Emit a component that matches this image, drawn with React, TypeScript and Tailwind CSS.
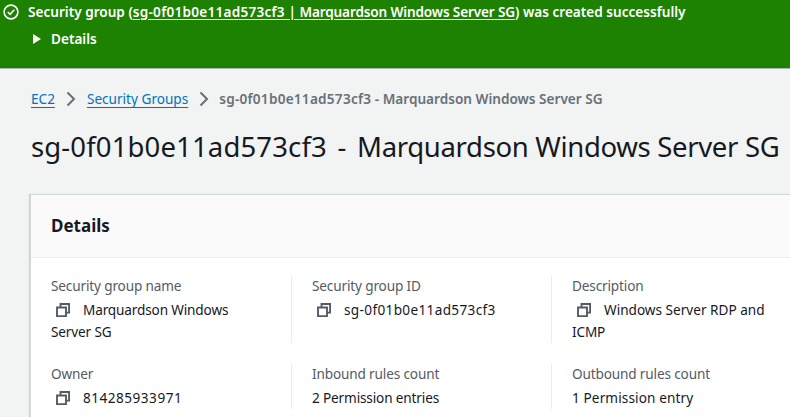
const SG_ID = 'sg-0f01b0e11ad573cf3'

function CopyIcon() {
  return (
    <svg width="14" height="14" viewBox="0 0 14 14" fill="none" stroke="#545b64" strokeWidth="1.9" className="block">
      <path d="M1 4.5h9v8.6H1z" />
      <path d="M4.5 4.5V1h8.6v8.6H10" />
    </svg>
  )
}

function Chevron() {
  return (
    <svg width="16" height="16" viewBox="0 0 16 16" fill="none" stroke="#687078" strokeWidth="2" className="shrink-0">
      <path d="M4.5 1.5l6.5 6.5-6.5 6.5" />
    </svg>
  )
}

interface FieldProps {
  label: string
  children: React.ReactNode
  first?: boolean
}

function Field({ label, children, first }: FieldProps) {
  return (
    <div className={`shrink-0 pr-5 tracking-[-0.011em] ${first ? 'w-[240px]' : 'w-[260px] pl-5 border-l border-[#eaeded]'}`}>
      <div className="text-[#545b64] leading-[22px]">{label}</div>
      <div className="mt-[2px] text-[#16191f] leading-[22px]">{children}</div>
    </div>
  )
}

function CopyValue({ text, rest, wide }: { text: string; rest?: string; wide?: string }) {
  return (
    <>
      <span className="inline-block w-[32px] align-[-2px] pl-[5px]">
        <CopyIcon />
      </span>
      <span className={wide}>{text}</span>
      {rest && <br />}
      {rest}
    </>
  )
}

export default function App() {
  return (
    <div className="w-[790px] h-[417px] overflow-hidden bg-[#f2f3f3] text-[13.6px] font-['Noto_Sans','Open_Sans',sans-serif]">
      <div className="h-[69px] bg-[#1d8102] border-b border-[#aab7b8] text-white font-semibold">
        <div className="flex items-center gap-[10px] pl-[3px] h-[24px]">
          <svg width="16" height="16" viewBox="0 0 16 16" fill="none" stroke="#fff" strokeWidth="1.6" className="shrink-0">
            <circle cx="8" cy="8" r="6.9" />
            <path d="M4.8 8l2.3 2.4 4.2-4.6" />
          </svg>
          <span className="-ml-[1px] whitespace-nowrap">
            Security group (<span className="underline underline-offset-[2px]"><span className="tracking-[0.018em]">{SG_ID}</span> | <span className="tracking-[-0.011em]">Marquardson Windows Server SG</span></span>) was created successfully
          </span>
        </div>
        <div className="flex items-center gap-[10px] pl-[33px] mt-[4px] h-[22px]">
          <span className="w-0 h-0 border-y-[5px] border-y-transparent border-l-[8px] border-l-white" />
          <span>Details</span>
        </div>
      </div>

      <div className="pl-[31px] pt-[19px] flex items-center h-[41px] whitespace-nowrap text-[#0073bb]">
        <span className="underline underline-offset-[3px]">EC2</span>
        <span className="mx-[8px]"><Chevron /></span>
        <span className="underline underline-offset-[3px]">Security Groups</span>
        <span className="ml-[8px] mr-[7px]"><Chevron /></span>
        <span className="text-[#687078] font-semibold">
          <span className="tracking-[0.018em]">{SG_ID}</span> - Marquardson Windows Server SG
        </span>
      </div>

      <h1 className="pl-[31px] mt-[17px] text-[#16191f] text-[27.5px] leading-[40px] whitespace-nowrap">
        <span className="tracking-[0.005em]">{SG_ID}</span> <span className="mx-[3.5px]">-</span> <span className="tracking-[-0.012em]">Marquardson Windows Server SG</span>
      </h1>

      <div className="ml-[30px] mt-[27px] w-[800px] bg-white border-l border-t border-[#d5dbdb] shadow-[-1px_0_1px_rgba(0,28,36,0.15)]">
        <div className="h-[63px] bg-[#fafafa] border-b border-[#eaeded] pl-[20px] flex items-center">
          <h2 className="text-[#16191f] font-bold text-[17px] -mt-[1px]">Details</h2>
        </div>
        <div className="pl-[20px] pt-[17px] pb-[20px]">
          <div className="flex h-[68px]">
            <Field label="Security group name" first><CopyValue text="Marquardson Windows" rest="Server SG" /></Field>
            <Field label="Security group ID"><CopyValue text={SG_ID} wide="tracking-[0.025em]" /></Field>
            <Field label="Description"><CopyValue text="Windows Server RDP and" rest="ICMP" wide="tracking-[0]" /></Field>
          </div>
          <div className="flex h-[46px] mt-[20px]">
            <Field label="Owner" first><CopyValue text="814285933971" wide="tracking-[0.036em]" /></Field>
            <Field label="Inbound rules count">2 Permission entries</Field>
            <Field label="Outbound rules count"><span className="tracking-[0.008em]">1 Permission entry</span></Field>
          </div>
        </div>
      </div>
    </div>
  )
}
